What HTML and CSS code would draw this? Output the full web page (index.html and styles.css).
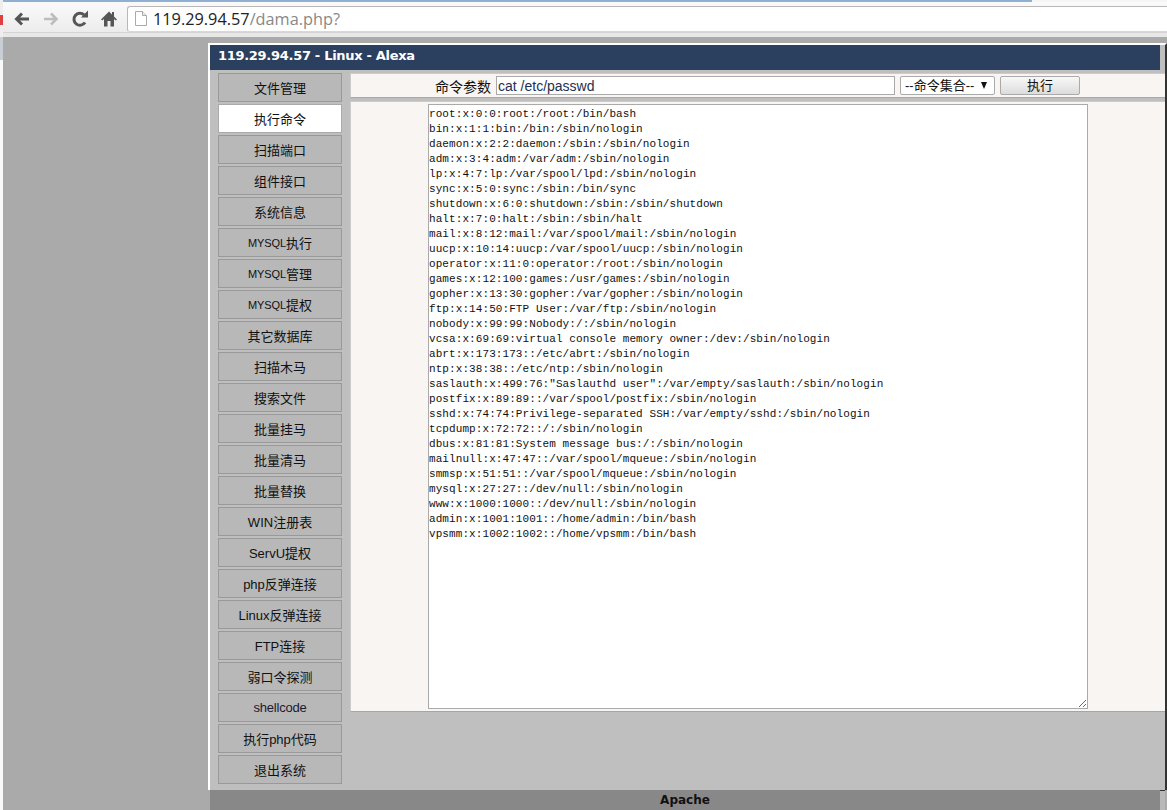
FILE: index.html
```html
<!DOCTYPE html>
<html lang="zh">
<head>
<meta charset="utf-8">
<title>119.29.94.57 - Linux - Alexa</title>
<link rel="stylesheet" href="styles.css">
</head>
<body>
<div class="edge"></div>
<div class="browser">
  <div class="tabstrip"></div>
  <div class="toolbar">
    <svg class="nav nav-back" viewBox="0 0 18 18"><path d="M16 9H4M9 3.5 3.5 9 9 14.500" fill="none" stroke="#555" stroke-width="3"/></svg>
    <svg class="nav nav-forward" viewBox="0 0 18 18"><path d="M2 9h12M9 3.500 14.500 9 9 14.500" fill="none" stroke="#bdbdbd" stroke-width="2.600"/></svg>
    <svg class="nav nav-reload" viewBox="0 0 18 18"><path d="M14 12.500A6 6 0 1 1 13 4.800" fill="none" stroke="#555" stroke-width="3"/><path d="M10 7.500h7v-7z" fill="#555"/></svg>
    <svg class="nav nav-home" viewBox="0 0 18 18"><path d="M9 1.500 1 9.500l1.200 1L4 9v7.500h3.500V11h3v5.500H14V9l1.800 1.500 1.200-1-3-3V2h-2v2.500z" fill="#555"/></svg>
    <div class="omnibox">
      <svg class="page-icon" viewBox="0 0 12 15"><path d="M.5.500h7l4 4v10H.5z" fill="#fff" stroke="#aaa"/><path d="M7.500.500v4h4" fill="#eee" stroke="#aaa"/></svg>
      <span class="host">119.29.94.57</span><span class="path">/dama.php?</span>
    </div>
  </div>
  <div class="toolbar-foot"></div>
  <div class="viewport">
    <div class="window">
      <div class="titlebar">119.29.94.57 - Linux - Alexa</div>
      <div class="panels">
        <nav class="sidebar">
          <a class="menu-item">文件管理</a>
          <a class="menu-item is-active">执行命令</a>
          <a class="menu-item">扫描端口</a>
          <a class="menu-item">组件接口</a>
          <a class="menu-item">系统信息</a>
          <a class="menu-item"><span class="caps">MYSQL</span>执行</a>
          <a class="menu-item"><span class="caps">MYSQL</span>管理</a>
          <a class="menu-item"><span class="caps">MYSQL</span>提权</a>
          <a class="menu-item">其它数据库</a>
          <a class="menu-item">扫描木马</a>
          <a class="menu-item">搜索文件</a>
          <a class="menu-item">批量挂马</a>
          <a class="menu-item">批量清马</a>
          <a class="menu-item">批量替换</a>
          <a class="menu-item">WIN注册表</a>
          <a class="menu-item">ServU提权</a>
          <a class="menu-item">php反弹连接</a>
          <a class="menu-item">Linux反弹连接</a>
          <a class="menu-item">FTP连接</a>
          <a class="menu-item">弱口令探测</a>
          <a class="menu-item menu-code">shellcode</a>
          <a class="menu-item">执行php代码</a>
          <a class="menu-item">退出系统</a>
        </nav>
        <main class="main">
          <form class="command-row">
            <label class="command-label" for="cmd">命令参数</label>
            <input class="command-input" id="cmd" type="text" value="cat /etc/passwd">
            <span class="select-wrap">
              <select class="command-select"><option>--命令集合--</option></select>
            </span>
            <button class="command-run" type="button">执行</button>
          </form>
          <div class="output-panel">
            <textarea class="output" readonly spellcheck="false">root:x:0:0:root:/root:/bin/bash
bin:x:1:1:bin:/bin:/sbin/nologin
daemon:x:2:2:daemon:/sbin:/sbin/nologin
adm:x:3:4:adm:/var/adm:/sbin/nologin
lp:x:4:7:lp:/var/spool/lpd:/sbin/nologin
sync:x:5:0:sync:/sbin:/bin/sync
shutdown:x:6:0:shutdown:/sbin:/sbin/shutdown
halt:x:7:0:halt:/sbin:/sbin/halt
mail:x:8:12:mail:/var/spool/mail:/sbin/nologin
uucp:x:10:14:uucp:/var/spool/uucp:/sbin/nologin
operator:x:11:0:operator:/root:/sbin/nologin
games:x:12:100:games:/usr/games:/sbin/nologin
gopher:x:13:30:gopher:/var/gopher:/sbin/nologin
ftp:x:14:50:FTP User:/var/ftp:/sbin/nologin
nobody:x:99:99:Nobody:/:/sbin/nologin
vcsa:x:69:69:virtual console memory owner:/dev:/sbin/nologin
abrt:x:173:173::/etc/abrt:/sbin/nologin
ntp:x:38:38::/etc/ntp:/sbin/nologin
saslauth:x:499:76:"Saslauthd user":/var/empty/saslauth:/sbin/nologin
postfix:x:89:89::/var/spool/postfix:/sbin/nologin
sshd:x:74:74:Privilege-separated SSH:/var/empty/sshd:/sbin/nologin
tcpdump:x:72:72::/:/sbin/nologin
dbus:x:81:81:System message bus:/:/sbin/nologin
mailnull:x:47:47::/var/spool/mqueue:/sbin/nologin
smmsp:x:51:51::/var/spool/mqueue:/sbin/nologin
mysql:x:27:27::/dev/null:/sbin/nologin
www:x:1000:1000::/dev/null:/sbin/nologin
admin:x:1001:1001::/home/admin:/bin/bash
vpsmm:x:1002:1002::/home/vpsmm:/bin/bash</textarea>
          </div>
        </main>
      </div>
    </div>
    <div class="footer-row">
      <footer class="footer">Apache</footer>
      <div class="footer-end"></div>
    </div>
  </div>
</div>
</body>
</html>
```

FILE: styles.css
```css
* { box-sizing: border-box; }
html, body { margin: 0; height: 100%; }
body {
  display: flex;
  width: 1167px;
  height: 810px;
  overflow: hidden;
  background: #fff;
  color: #111;
  font-family: "Liberation Sans", "Noto Sans CJK SC", sans-serif;
}
.edge {
  flex: 0 0 3px;
  background: linear-gradient(#eee 0, #eee 15px, #e04040 15px, #e04040 25px, #eee 25px, #eee 37px, #c9cdd4 37px, #c9cdd4 60px, #fafafa 60px);
}
.browser { flex: 1; min-width: 0; display: flex; flex-direction: column; }
.tabstrip {
  flex: 0 0 2px;
  background: linear-gradient(90deg, #8fb0d2 0, #8fb0d2 1029px, #f5f5f5 1029px);
}
.toolbar {
  flex: 0 0 31px;
  display: flex;
  align-items: center;
  padding-left: 10px;
  background: linear-gradient(#fafafa, #ececec);
  border-bottom: 1px solid #d4d4d4;
}
.toolbar-foot { flex: 0 0 4px; background: #e8e8e8; }
.nav { width: 18px; height: 18px; flex: none; margin-right: 11px; margin-top: 3px; }
.nav-home { margin-right: 9px; }
.omnibox {
  flex: 1;
  height: 26px;
  margin-top: 3px;
  margin-right: -3px;
  display: flex;
  align-items: center;
  background: #fff;
  border: 1px solid #b8b8b8;
  border-right: 0;
  border-bottom-color: #d8d8d8;
  border-radius: 3px 0 0 3px;
  padding-left: 7px;
  font: 16.300px "Open Sans", sans-serif;
}
.page-icon { width: 12px; height: 15px; margin-right: 6px; flex: none; }
.host { color: #222; }
.path { color: #888; }
.viewport {
  flex: 1;
  min-height: 0;
  display: flex;
  flex-direction: column;
  background: #aaa;
  padding: 6px 0 0 205px;
}
.window {
  flex: 0 0 747px;
  background: #bfbfbf;
  border-top: 2px solid #fff;
  border-left: 2px solid #fff;
  border-right: 2px solid #333;
  display: flex;
  flex-direction: column;
}
.titlebar {
  flex: 0 0 25px;
  margin-right: 5px;
  padding-left: 8px;
  background: #2b3f5f;
  color: #fff;
  font: bold 13px/22px "DejaVu Sans", sans-serif;
  letter-spacing: -0.300px;
}
.panels { display: flex; gap: 8px; padding: 3px 0 0 8px; }
.sidebar { flex: 0 0 124px; display: flex; flex-direction: column; gap: 2px; }
.menu-item {
  height: 29px;
  display: flex;
  align-items: center;
  justify-content: center;
  background: #b8b8b8;
  border: 1px solid #999;
  font-size: 13px;
  color: #111;
}
.menu-item.is-active { background: #fff; border-color: #aaa; }
.menu-code { letter-spacing: -0.200px; color: #1a1a33; }
.caps { font-size: 11px; letter-spacing: -0.150px; }
.main { flex: 1; min-width: 0; display: flex; flex-direction: column; gap: 3px; }
.command-row {
  height: 25px;
  margin: 0;
  display: flex;
  align-items: center;
  padding-left: 84px;
  background: #f8f5f2;
  border: 1px solid #ccc;
  border-right: 0;
  border-bottom-color: #a8a8a8;
}
.command-label { font-size: 14px; margin-right: 5px; width: 56px; white-space: nowrap; }
.command-input {
  width: 399px;
  height: 19px;
  margin: 0 5px 0 0;
  padding: 0 1px;
  background: #fff;
  border: 1px solid #aaa;
  color: #1d2f4f;
  font: 14px "Liberation Sans", sans-serif;
  outline: none;
}
.select-wrap { position: relative; width: 95px; height: 19px; margin-right: 5px; }
.select-wrap::after {
  content: "";
  position: absolute;
  right: 8px;
  top: 6px;
  border-top: 7px solid #111;
  border-left: 3.500px solid transparent;
  border-right: 3.500px solid transparent;
}
.command-select {
  appearance: none;
  width: 100%;
  height: 100%;
  padding: 0 0 0 4px;
  background: #fff;
  border: 1px solid #aaa;
  border-radius: 2px;
  font: 13px "Liberation Sans", "Noto Sans CJK SC", sans-serif;
  color: #111;
}
.command-run {
  width: 80px;
  height: 19px;
  padding: 0;
  background: linear-gradient(#f8f8f8, #dcdcdc);
  border: 1px solid #aaa;
  border-radius: 2px;
  font: 13px/17px "Liberation Sans", "Noto Sans CJK SC", sans-serif;
  color: #111;
}
.output-panel {
  height: 611px;
  padding: 2px 0 0 77px;
  background: #f8f5f2;
  border: 1px solid #ccc;
  border-right: 0;
  border-bottom-color: #a5a5a5;
}
.output {
  display: block;
  width: 660px;
  height: 605px;
  margin: 0;
  padding: 2px 0 0 0;
  background: #fff;
  border: 1px solid #aaa;
  color: #111;
  font: 11px/15px "Liberation Mono", monospace;
  letter-spacing: 0.080px;
  white-space: pre;
  overflow: hidden;
  resize: both;
  outline: none;
}
.footer-row { flex: 1; display: flex; margin-left: 2px; }
.footer {
  flex: 0 0 950px;
  background: #888;
  color: #111;
  text-align: center;
  font: bold 12px/21px "DejaVu Sans", sans-serif;
}
.footer-end { flex: 0 0 5px; background: #b9b9b9; border-top: 1px solid #333; }
```
